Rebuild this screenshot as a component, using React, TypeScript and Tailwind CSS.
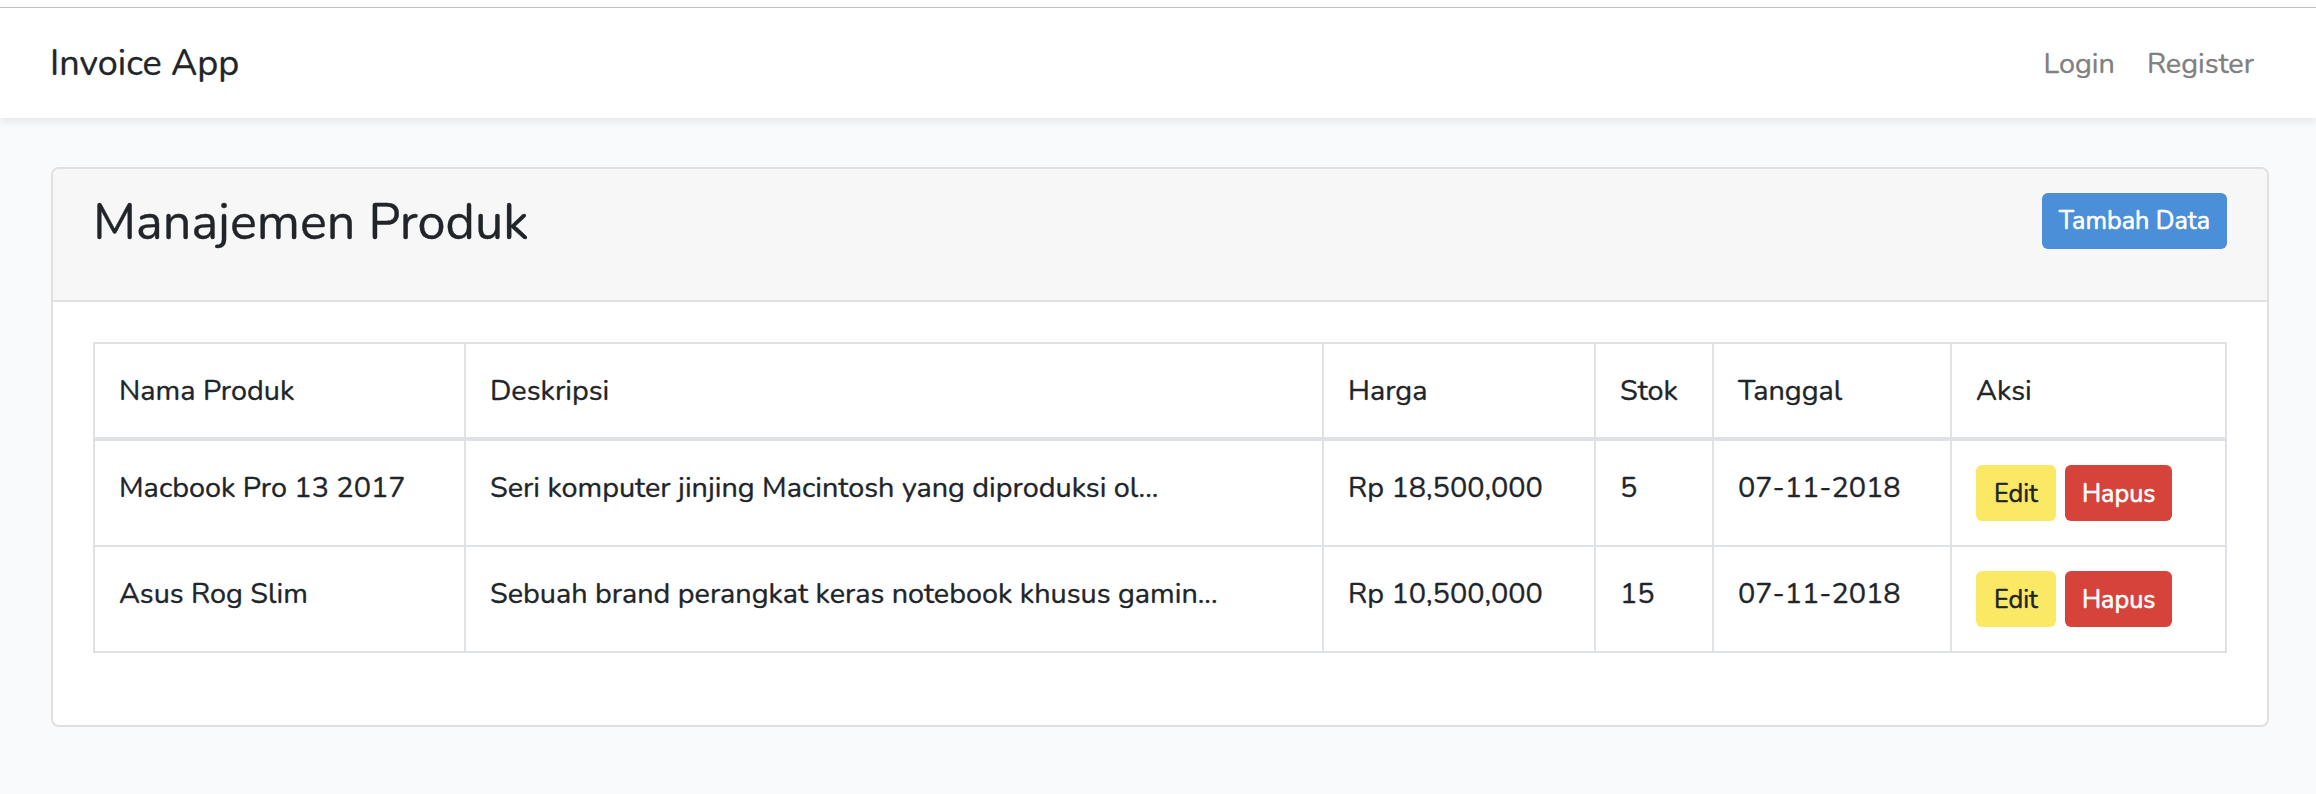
import React from "react";

const font = { fontFamily: '"Nunito", "Liberation Sans", Arial, sans-serif' };

const rows = [
  {
    nama: "Macbook Pro 13 2017",
    desk: "Seri komputer jinjing Macintosh yang diproduksi ol...",
    harga: "Rp 18,500,000",
    stok: "5",
    tgl: "07-11-2018",
  },
  {
    nama: "Asus Rog Slim",
    desk: "Sebuah brand perangkat keras notebook khusus gamin...",
    harga: "Rp 10,500,000",
    stok: "15",
    tgl: "07-11-2018",
  },
];

export default function App() {
  return (
    <div
      className="min-h-screen w-full bg-[#f8fafc] text-[#212529] [-webkit-text-stroke:0.35px_currentColor]"
      style={font}
    >
      <div className="h-[7px] bg-white" />
      <div className="h-px bg-[#c4c4c4]" />
      <nav className="relative z-10 flex h-[110px] items-center justify-between bg-white pl-[50px] pr-[46px] pt-[2px] shadow-[0_4px_8px_rgba(0,0,0,0.075)]">
        <span className="text-[36px] leading-[46px] text-[#212529]">Invoice App</span>
        <div className="flex items-center">
          <span className="px-4 text-[28.8px] leading-[46px] text-[#808080]">Login</span>
          <span className="px-4 text-[28.8px] leading-[46px] text-[#808080]">Register</span>
        </div>
      </nav>

      <main className="pt-[49px] pl-[51px] pr-[47px]">
        <div className="overflow-hidden rounded-[8px] border-2 border-[#e0e0e0] bg-white">
          <div className="flex h-[133px] items-start justify-between border-b-2 border-[#e0e0e0] bg-[#f7f7f7] pl-[40px] pr-[40px] pt-[24px]">
            <h3 className="pt-[2px] text-[50.4px] leading-[56px] font-normal text-[#212529]">Manajemen Produk</h3>
            <button className="h-[56px] rounded-[6px] bg-[#4a8fd8] px-[17px] text-[25.2px] leading-[56px] text-white [-webkit-text-stroke:0.6px_currentColor]">
              Tambah Data
            </button>
          </div>

          <div className="p-[40px] pb-[72px]">
            <div className="border-2 border-[#dee2e6]">
              <div className="flex h-[97px] border-b-4 border-[#dee2e6] text-[28.8px] leading-[46px]">
                <div className="w-[369px] pl-[24px] pt-[24px]">Nama Produk</div>
                <div className="w-[858px] border-l-2 border-[#dee2e6] pl-[24px] pt-[24px]">Deskripsi</div>
                <div className="w-[272px] border-l-2 border-[#dee2e6] pl-[24px] pt-[24px]">Harga</div>
                <div className="w-[118px] border-l-2 border-[#dee2e6] pl-[24px] pt-[24px]">Stok</div>
                <div className="w-[238px] border-l-2 border-[#dee2e6] pl-[24px] pt-[24px]">Tanggal</div>
                <div className="flex-1 border-l-2 border-[#dee2e6] pl-[24px] pt-[24px]">Aksi</div>
              </div>
              {rows.map((r, i) => (
                <div
                  key={i}
                  className={
                    i === 0
                      ? "flex h-[106px] border-b-2 border-[#dee2e6] text-[28.8px] leading-[46px]"
                      : "flex h-[104px] text-[28.8px] leading-[46px]"
                  }
                >
                  <div className="w-[369px] pl-[24px] pt-[24px]">{r.nama}</div>
                  <div className="w-[858px] border-l-2 border-[#dee2e6] pl-[24px] pt-[24px] whitespace-nowrap">
                    {r.desk}
                  </div>
                  <div className="w-[272px] border-l-2 border-[#dee2e6] pl-[24px] pt-[24px]">{r.harga}</div>
                  <div className="w-[118px] border-l-2 border-[#dee2e6] pl-[24px] pt-[24px]">{r.stok}</div>
                  <div className="w-[238px] border-l-2 border-[#dee2e6] pl-[24px] pt-[24px]">{r.tgl}</div>
                  <div className="flex flex-1 items-start gap-[9px] border-l-2 border-[#dee2e6] pl-[24px] pt-[24px]">
                    <button className="h-[56px] rounded-[6px] bg-[#fbe966] px-[18px] text-[25.2px] leading-[58px] text-[#212529] [-webkit-text-stroke:0.5px_currentColor]">
                      Edit
                    </button>
                    <button className="h-[56px] rounded-[6px] bg-[#d6433a] px-[17px] text-[25.2px] leading-[58px] text-white [-webkit-text-stroke:0.6px_currentColor]">
                      Hapus
                    </button>
                  </div>
                </div>
              ))}
            </div>
          </div>
        </div>
      </main>
    </div>
  );
}
